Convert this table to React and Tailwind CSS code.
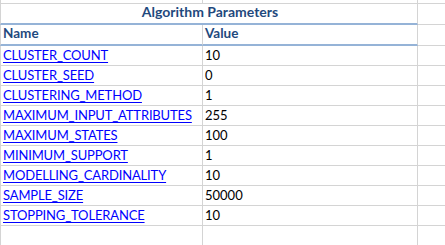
const params = [
  ["CLUSTER_COUNT", "10"],
  ["CLUSTER_SEED", "0"],
  ["CLUSTERING_METHOD", "1"],
  ["MAXIMUM_INPUT_ATTRIBUTES", "255"],
  ["MAXIMUM_STATES", "100"],
  ["MINIMUM_SUPPORT", "1"],
  ["MODELLING_CARDINALITY", "10"],
  ["SAMPLE_SIZE", "50000"],
  ["STOPPING_TOLERANCE", "10"],
];

function Row({ a, b }) {
  // one spreadsheet row: col A, col B, col C with gridlines
  return (
    <div className="flex h-5">
      <div className="w-[203px] shrink-0 border-l border-r border-b border-[#d4d4d4] flex items-end pb-[3px] pl-[2px] overflow-hidden">
        {a}
      </div>
      <div className="w-[215px] shrink-0 border-r border-b border-[#d4d4d4] flex items-end pb-[3px] pl-[2px]">
        {b}
      </div>
      <div className="flex-1 border-b border-[#d4d4d4]" />
    </div>
  );
}

export default function App() {
  return (
    <main
      className="w-[445px] h-[245px] overflow-hidden bg-white text-[13px] text-black leading-none"
      style={{ fontFamily: "Lato, 'Liberation Sans', sans-serif" }}
    >
      <div className="flex h-[4px]">
        <div className="w-[203px] shrink-0 border-l border-r border-b border-[#d4d4d4]" />
        <div className="w-[215px] shrink-0 border-r border-b border-[#d4d4d4]" />
        <div className="flex-1 border-b border-[#d4d4d4]" />
      </div>
      <div className="flex h-[21px]">
        <div className="w-[418px] shrink-0 border-l border-r border-l-[#d4d4d4] border-r-[#d4d4d4] border-b-2 border-b-[#95b3d7] flex items-end justify-center pb-[4px] pl-[2px] text-[14px] font-bold text-[#1f497d]">
          Algorithm Parameters
        </div>
        <div className="flex-1 border-b border-[#d4d4d4]" />
      </div>
      <div className="flex h-[21px]">
        <div className="w-[203px] shrink-0 border-l border-r border-l-[#d4d4d4] border-r-[#d4d4d4] border-b-2 border-b-[#95b3d7] flex items-end pb-[4px] pl-[2px] text-[13.5px] font-bold text-[#1f497d]">
          Name
        </div>
        <div className="w-[215px] shrink-0 border-r border-r-[#d4d4d4] border-b-2 border-b-[#95b3d7] flex items-end pb-[4px] pl-[2px] text-[13.5px] font-bold text-[#1f497d]">
          Value
        </div>
        <div className="flex-1 border-b border-[#d4d4d4]" />
      </div>
      {params.map(([k, v]) => (
        <Row
          key={k}
          a={<a href="#" className="text-[#0000ff] underline underline-offset-[2px] decoration-1 whitespace-nowrap tracking-[-0.15px]">{k}</a>}
          b={<span>{v}</span>}
        />
      ))}
      <Row />
    </main>
  );
}
